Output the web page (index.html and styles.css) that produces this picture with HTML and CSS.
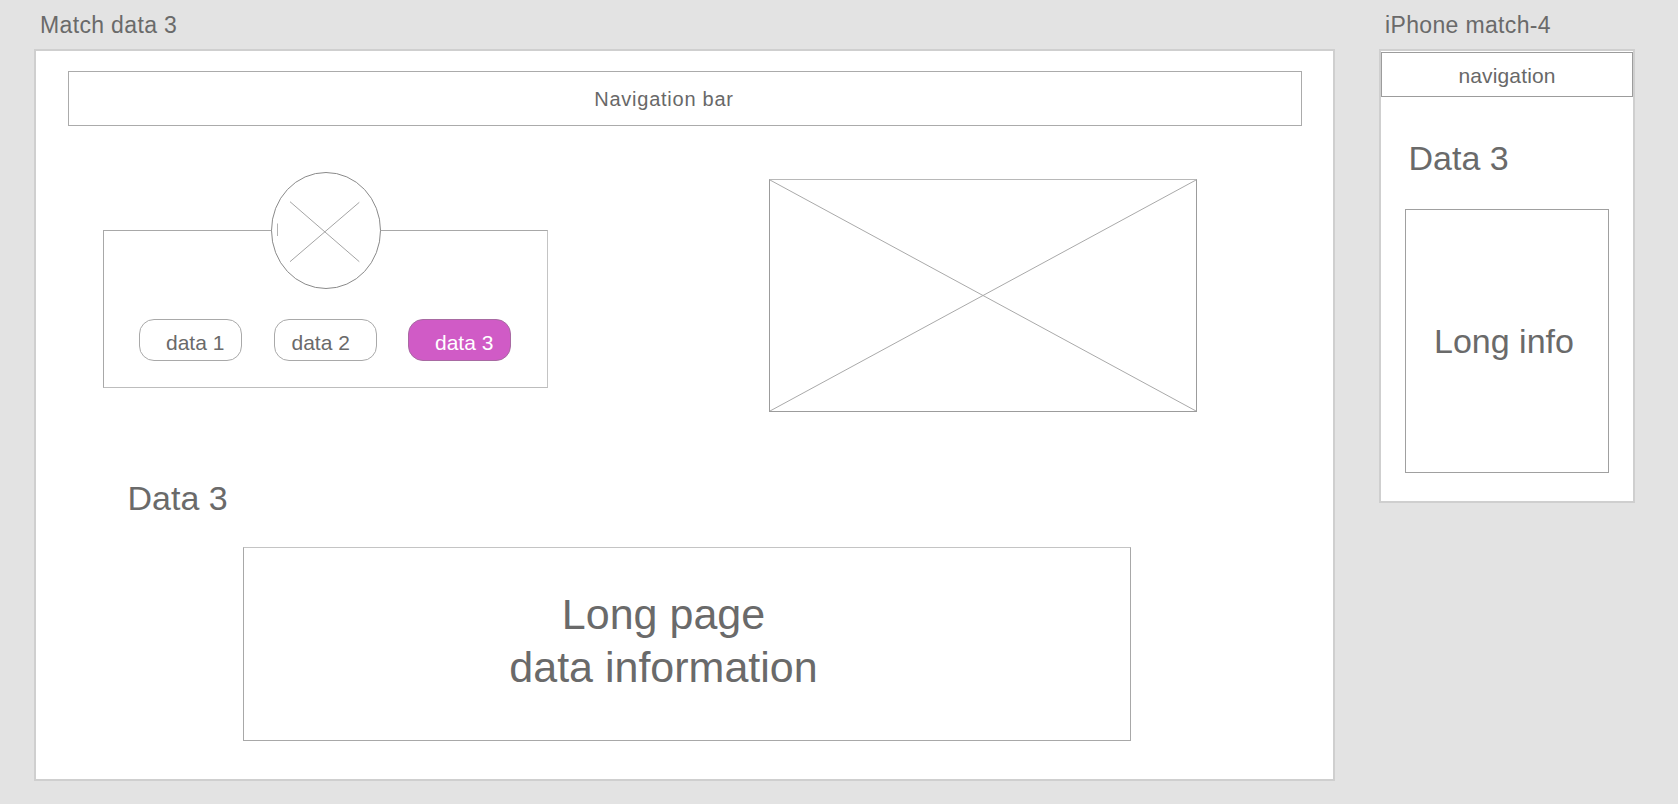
FILE: index.html
```html
<!DOCTYPE html>
<html lang="en">
<head>
<meta charset="utf-8">
<title>Match data 3</title>
<link rel="stylesheet" href="styles.css">
</head>
<body>
<div class="canvas">
  <section class="board board--desktop">
    <h1 class="board-title">Match data 3</h1>
    <div class="frame frame--desktop">
      <div class="navbar">Navigation bar</div>
      <div class="middle-row">
        <div class="card">
          <svg class="avatar" width="110" height="117" viewBox="0 0 110 117">
            <ellipse cx="55" cy="58.5" rx="54.5" ry="58" fill="#fff" stroke="#8a8a8a" stroke-width="1"/>
            <line x1="19" y1="29.7" x2="88.3" y2="89.7" stroke="#9a9a9a" stroke-width="0.9"/>
            <line x1="88.3" y1="30.3" x2="19" y2="89.7" stroke="#9a9a9a" stroke-width="0.9"/>
            <line x1="6.5" y1="51.5" x2="6.5" y2="64" stroke="#aaaaaa" stroke-width="0.9"/>
          </svg>
          <div class="chips">
            <div class="chip chip--one">data 1</div>
            <div class="chip chip--two">data 2</div>
            <div class="chip chip--three chip--active">data 3</div>
          </div>
        </div>
        <div class="image-box">
          <svg width="428" height="233" viewBox="0 0 428 233" preserveAspectRatio="none">
            <line x1="0" y1="0" x2="428" y2="233" stroke="#a8a8a8" stroke-width="1"/>
            <line x1="428" y1="0" x2="0" y2="233" stroke="#a8a8a8" stroke-width="1"/>
          </svg>
        </div>
      </div>
      <h2 class="section-title section-title--desktop">Data 3</h2>
      <div class="long-box">
        <p class="long-text">Long page<br>data information</p>
      </div>
    </div>
  </section>

  <section class="board board--phone">
    <h1 class="board-title">iPhone match-4</h1>
    <div class="frame frame--phone">
      <div class="phone-nav">navigation</div>
      <h2 class="section-title section-title--phone">Data 3</h2>
      <div class="info-box">Long info</div>
    </div>
  </section>
</div>
</body>
</html>
```

FILE: styles.css
```css
* {
  box-sizing: border-box;
}

html, body {
  margin: 0;
  padding: 0;
}

body {
  background: #e3e3e3;
  font-family: "Liberation Sans", Arial, sans-serif;
  color: #686868;
  width: 1678px;
  height: 804px;
  overflow: hidden;
}

.canvas {
  display: flex;
  align-items: flex-start;
  gap: 44px;
  padding: 14px 0 0 34px;
}

.board-title {
  margin: 0 0 12px 0;
  padding-left: 6px;
  font-size: 23px;
  line-height: 23px;
  font-weight: normal;
  letter-spacing: 0.35px;
  color: #6a6a6a;
  white-space: nowrap;
}

.frame {
  background: #fff;
  border: 2px solid #cfcfcf;
}

.frame--desktop {
  width: 1301px;
  height: 732px;
  display: flex;
  flex-direction: column;
  align-items: flex-start;
}

.navbar {
  margin: 20px 0 0 32px;
  width: 1234px;
  height: 55px;
  border: 1px solid #ababab;
  display: flex;
  align-items: center;
  justify-content: center;
  padding: 2px 42px 0 0;
  font-size: 20px;
  letter-spacing: 0.75px;
}

.middle-row {
  display: flex;
  align-items: flex-start;
}

.card {
  position: relative;
  margin: 104px 0 0 67px;
  width: 445px;
  height: 158px;
  border: 1px solid #a8a8a8;
  border-right-color: #c4c4c4;
  border-bottom-color: #bdbdbd;
  padding: 88px 0 0 35px;
}

.avatar {
  position: absolute;
  top: -59px;
  left: 50%;
  transform: translateX(-50%);
  display: block;
}

.chips {
  display: flex;
  gap: 31.5px;
}

.chip {
  width: 103px;
  height: 42px;
  border: 1px solid #a9a9a9;
  border-radius: 15px;
  font-size: 21px;
  line-height: 35px;
  padding-top: 5px;
  color: #6a6a6a;
  white-space: nowrap;
}

.chip--one {
  padding-left: 26px;
}

.chip--two {
  padding-left: 17px;
}

.chip--three {
  padding-left: 26px;
}

.chip--active {
  background: #d05bc6;
  border-color: #a86aa2;
  color: #fff;
}

.image-box {
  margin: 53px 0 0 221px;
  width: 428px;
  height: 233px;
  border: 1px solid #9c9c9c;
  border-top: 1px solid #b8b8b8;
  overflow: hidden;
}

.image-box svg {
  display: block;
  width: 100%;
  height: 100%;
}

.section-title {
  margin: 0;
  font-weight: normal;
  font-size: 34px;
  line-height: 34px;
  color: #6a6a6a;
  white-space: nowrap;
}

.section-title--desktop {
  margin: 69px 0 0 91.5px;
}

.long-box {
  margin: 32px 0 0 207px;
  width: 888px;
  height: 194px;
  border: 1px solid #a8a8a8;
  border-top-color: #c4c4c4;
  display: flex;
  align-items: center;
  justify-content: center;
  padding: 0 47px 6px 0;
}

.long-text {
  margin: 0;
  text-align: center;
  font-size: 43px;
  line-height: 53px;
  color: #6a6a6a;
}

.frame--phone {
  width: 256px;
  height: 454px;
  display: flex;
  flex-direction: column;
  align-items: flex-start;
}

.phone-nav {
  margin-top: 1px;
  width: 100%;
  height: 45px;
  border: 1px solid #9c9c9c;
  display: flex;
  align-items: center;
  justify-content: center;
  padding-top: 2px;
  font-size: 21px;
  letter-spacing: 0.15px;
}

.section-title--phone {
  margin: 43.5px 0 0 27.5px;
}

.info-box {
  margin: 34.5px 0 0 24.3px;
  width: 203.4px;
  height: 264px;
  border: 1px solid #a0a0a0;
  display: flex;
  align-items: center;
  justify-content: center;
  padding-right: 6px;
  font-size: 34px;
  color: #6a6a6a;
  white-space: nowrap;
}
```
